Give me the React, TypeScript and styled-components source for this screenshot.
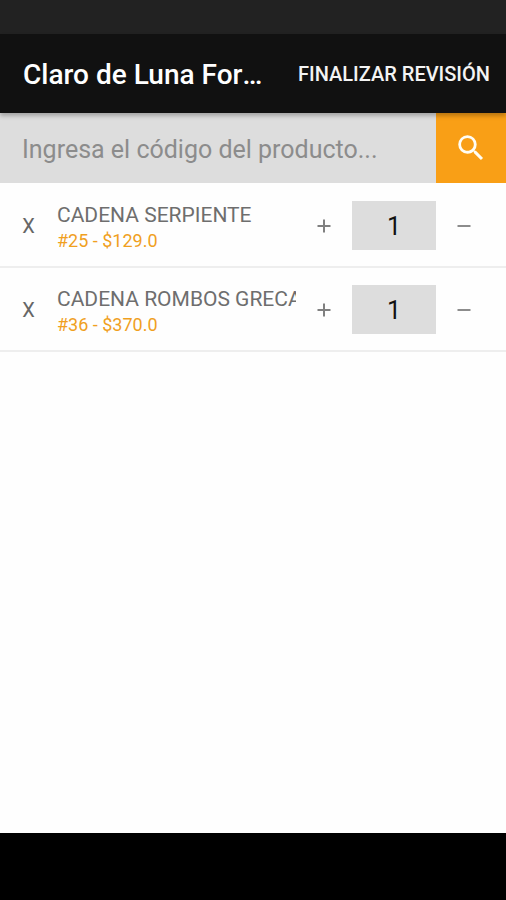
import React, { useState } from "react";
import styled, { createGlobalStyle } from "styled-components";

const GlobalStyle = createGlobalStyle`
  *, *::before, *::after { box-sizing: border-box; }
  body { margin: 0; background: #fefefe; font-family: Roboto, sans-serif; }
  button, input { font: inherit; border: 0; border-radius: 0; margin: 0; padding: 0; }
  button { background: none; cursor: pointer; }
`;

const Screen = styled.div`
  display: flex;
  flex-direction: column;
  min-height: 100vh;
`;

const StatusBar = styled.div`
  height: 34px;
  background: #222222;
`;

const AppBar = styled.header`
  display: flex;
  align-items: center;
  gap: 32px;
  height: 79px;
  padding: 0 16px 0 23px;
  background: #111111;
  color: #ffffff;
  position: relative;
  box-shadow: 0 3px 4px rgba(0, 0, 0, 0.25);
`;

const Title = styled.h1`
  flex: 1;
  min-width: 0;
  margin: 0;
  padding-top: 2px;
  overflow: hidden;
  white-space: nowrap;
  text-overflow: ellipsis;
  font-size: 28px;
  line-height: 36px;
  font-weight: 500;
`;

const FinishButton = styled.button`
  color: #f4f4f4;
  font-size: 20px;
  line-height: 24px;
  font-weight: 500;
  white-space: nowrap;
`;

const SearchForm = styled.form`
  display: flex;
  height: 70px;
`;

const SearchInput = styled.input`
  flex: 1;
  min-width: 0;
  padding: 2px 22px 0;
  background: #dddddd;
  color: #222222;
  font-size: 25px;
  outline: none;
  &::placeholder { color: #8c8c8c; opacity: 1; }
`;

const SearchButton = styled.button`
  display: grid;
  place-items: center;
  width: 70px;
  background: #f99f16;
  color: #fffdf4;
`;

const ProductList = styled.ul`
  flex: 1;
  margin: 0;
  padding: 1px 0 0;
  list-style: none;
`;

const ProductRow = styled.li`
  display: grid;
  grid-template-columns: 57px minmax(0, 1fr) 56px 84px 56px;
  align-items: center;
  height: 84px;
  padding: 1px 14px 0 0;
  border-bottom: 2px solid #eeeeee;
`;

const RowButton = styled.button`
  display: grid;
  place-items: center;
  height: 49px;
  color: #666666;
  font-size: 20px;
`;

const ProductDetails = styled.div`
  padding-top: 2px;
`;

const ProductName = styled.div`
  overflow: hidden;
  white-space: nowrap;
  color: #6e6e6e;
  font-size: 21px;
  line-height: 28px;
`;

const ProductPrice = styled.div`
  color: #f0a01e;
  font-size: 18px;
  line-height: 24px;
`;

const Quantity = styled.input`
  width: 100%;
  height: 49px;
  padding-top: 2px;
  background: #dddddd;
  color: #111111;
  font-size: 25px;
  text-align: center;
  outline: none;
`;

const NavigationBar = styled.div`
  height: 67px;
  background: #000000;
`;

const SearchIcon = () => (
  <svg width="34" height="34" viewBox="0 0 24 24" fill="currentColor" aria-hidden="true">
    <path d="M15.5 14h-.79l-.28-.27A6.47 6.47 0 0 0 16 9.5 6.5 6.5 0 1 0 9.5 16c1.61 0 3.09-.59 4.23-1.57l.27.28v.79l5 4.99L20.49 19l-4.99-5zm-6 0C7.01 14 5 11.99 5 9.5S7.01 5 9.5 5 14 7.01 14 9.5 11.99 14 9.5 14z" />
  </svg>
);

const PlusIcon = () => (
  <svg width="14" height="14" viewBox="0 0 14 14" stroke="#808080" strokeWidth="2" aria-hidden="true">
    <path d="M.5 7h13M7 .5v13" />
  </svg>
);

const MinusIcon = () => (
  <svg width="14" height="14" viewBox="0 0 14 14" stroke="#8c8c8c" strokeWidth="2" aria-hidden="true">
    <path d="M.5 7h13" />
  </svg>
);

const initialProducts = [
  { code: 25, name: "CADENA SERPIENTE", price: "129.0", quantity: 1 },
  { code: 36, name: "CADENA ROMBOS GRECAS", price: "370.0", quantity: 1 },
];

export default function App() {
  const [products, setProducts] = useState(initialProducts);

  const setQuantity = (code: number, quantity: number) =>
    setProducts((list) =>
      list.map((p) => (p.code === code ? { ...p, quantity: Math.max(0, quantity) } : p))
    );

  return (
    <Screen>
      <GlobalStyle />
      <StatusBar />
      <AppBar>
        <Title>Claro de Luna Formal</Title>
        <FinishButton type="button">FINALIZAR REVISIÓN</FinishButton>
      </AppBar>
      <SearchForm onSubmit={(e) => e.preventDefault()}>
        <SearchInput
          aria-label="Código del producto"
          placeholder="Ingresa el código del producto..."
        />
        <SearchButton type="submit" aria-label="Buscar">
          <SearchIcon />
        </SearchButton>
      </SearchForm>
      <ProductList>
        {products.map((p) => (
          <ProductRow key={p.code}>
            <RowButton
              type="button"
              aria-label={`Quitar ${p.name}`}
              onClick={() => setProducts((list) => list.filter((x) => x.code !== p.code))}
            >
              X
            </RowButton>
            <ProductDetails>
              <ProductName>{p.name}</ProductName>
              <ProductPrice>
                #{p.code} - ${p.price}
              </ProductPrice>
            </ProductDetails>
            <RowButton type="button" aria-label="Aumentar" onClick={() => setQuantity(p.code, p.quantity + 1)}>
              <PlusIcon />
            </RowButton>
            <Quantity
              aria-label={`Cantidad de ${p.name}`}
              inputMode="numeric"
              value={p.quantity}
              onChange={(e) => setQuantity(p.code, Number(e.target.value) || 0)}
            />
            <RowButton type="button" aria-label="Disminuir" onClick={() => setQuantity(p.code, p.quantity - 1)}>
              <MinusIcon />
            </RowButton>
          </ProductRow>
        ))}
      </ProductList>
      <NavigationBar />
    </Screen>
  );
}
